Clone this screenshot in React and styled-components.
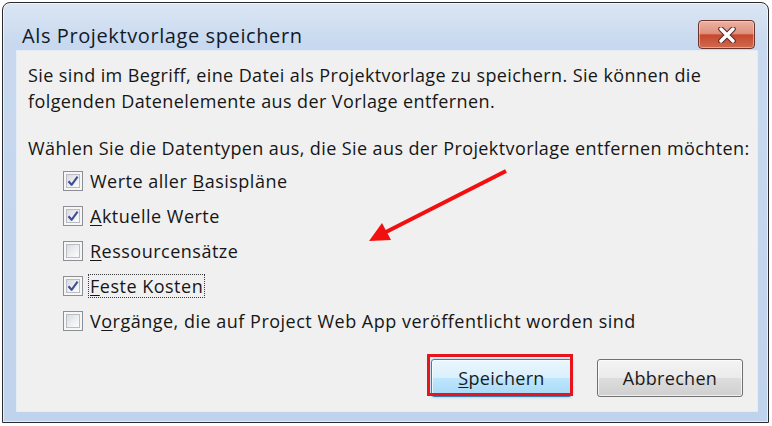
import React from "react";
import styled, { createGlobalStyle } from "styled-components";

const GlobalStyle = createGlobalStyle`
  body {
    margin: 0;
    background: #ffffff;
    font-family: "Open Sans", "Noto Sans", sans-serif;
  }
`;

const Window = styled.div`
  box-sizing: border-box;
  margin: 2px 0 0 2px;
  width: 767px;
  height: 421px;
  border: 1px solid #2b2b2b;
  border-radius: 8px 8px 0 0;
  background: linear-gradient(#dbe6f4 0px, #c8d9ef 40px, #c0d3ec 100%);
  display: flex;
  flex-direction: column;
  padding: 0 10px 10px 13px;
  box-shadow: inset 0 0 0 1px rgba(255, 255, 255, 0.6);
`;

const TitleBar = styled.div`
  height: 47px;
  display: flex;
  align-items: flex-start;
  justify-content: space-between;
`;

const Title = styled.div`
  margin: 21px 0 0 6px;
  font-size: 20px;
  letter-spacing: 0.6px;
  color: #111a28;
  line-height: 24px;
`;

const CloseButton = styled.div`
  box-sizing: border-box;
  margin: 17px 3px 0 0;
  width: 57px;
  height: 29px;
  border: 1px solid #6e3328;
  border-radius: 4px;
  background: linear-gradient(#eab2a5 0%, #e0907c 46%, #c6482d 52%, #cf6a4e 100%);
  box-shadow: inset 0 0 0 1px rgba(255, 220, 210, 0.5);
  display: flex;
  align-items: center;
  justify-content: center;
`;

const Panel = styled.div`
  position: relative;
  flex: 1;
  box-sizing: border-box;
  background: #f0f0f0;
  border: 1px solid #e4ecf6;
  padding: 11px 14px 14px 11px;
  display: flex;
  flex-direction: column;
  color: #161616;
  font-size: 18px;
  letter-spacing: 0.4px;
`;

const Text = styled.p`
  margin: ${(p) => p.$top || 0}px 0 0 0;
  line-height: 26px;
  white-space: nowrap;
`;

const List = styled.div`
  margin: 2px 0 0 35px;
  display: flex;
  flex-direction: column;
`;

const Row = styled.div`
  height: 35.2px;
  display: flex;
  align-items: center;
  gap: 5px;
`;

const Box = styled.div`
  box-sizing: border-box;
  width: 20px;
  height: 20px;
  border: 1px solid #8c8f94;
  background: #f6f6f6;
  padding: 2px;
  display: flex;
`;

const BoxInner = styled.div`
  flex: 1;
  border: 1px solid #b9bcc2;
  background: linear-gradient(135deg, #d9dbe0 0%, #f0f1f3 60%, #fbfbfb 100%);
  display: flex;
  align-items: center;
  justify-content: center;
`;

const Label = styled.span`
  line-height: 22px;
  padding: 0 1px;
  letter-spacing: 0.5px;
  border: 1px ${(p) => (p.$focus ? "dotted #3a3a3a" : "solid transparent")};
`;

const Key = styled.span`
  text-decoration: underline;
  text-underline-offset: 2px;
`;

const Buttons = styled.div`
  margin-top: auto;
  display: flex;
  justify-content: flex-end;
  gap: 25px;
`;

const ButtonWrap = styled.div`
  position: relative;
`;

const Highlight = styled.div`
  position: absolute;
  left: -4px;
  top: -5px;
  width: 146px;
  height: 42px;
  box-sizing: border-box;
  border: 3px solid #e8141b;
  pointer-events: none;
`;

const Button = styled.div`
  box-sizing: border-box;
  width: ${(p) => p.$width}px;
  height: 38px;
  border-radius: 3px;
  font-size: 18px;
  letter-spacing: 0.3px;
  color: #1a1a1a;
  display: flex;
  align-items: center;
  justify-content: center;
  border: 1px solid ${(p) => (p.$primary ? "#3c7fb1" : "#707070")};
  background: ${(p) =>
    p.$primary
      ? "linear-gradient(#eaf6fd 0%, #d9f0fc 50%, #bee6fd 51%, #a7d9f5 100%)"
      : "linear-gradient(#f4f4f4 0%, #ebebeb 50%, #dddddd 51%, #cfcfcf 100%)"};
  box-shadow: inset 0 0 0 1px rgba(255, 255, 255, 0.7)
    ${(p) => (p.$primary ? ", 0 0 3px #7cc4f0" : "")};
`;

const Arrow = styled.svg`
  position: absolute;
  left: 340px;
  top: 110px;
  width: 180px;
  height: 90px;
  overflow: visible;
`;

const Check = () => (
  <svg width="12" height="12" viewBox="0 0 12 12">
    <path
      d="M1.5 6.2 L4.6 9.8 L10.6 1.6"
      fill="none"
      stroke="#3d4f95"
      strokeWidth="2.1"
      strokeLinejoin="round"
    />
  </svg>
);

const items = [
  { checked: true, label: ["Werte aller ", "B", "asispläne"] },
  { checked: true, label: ["", "A", "ktuelle Werte"] },
  { checked: false, label: ["", "R", "essourcensätze"] },
  { checked: true, label: ["", "F", "este Kosten"], focus: true },
  {
    checked: false,
    label: ["V", "o", "rgänge, die auf Project Web App veröffentlicht worden sind"],
  },
];

export default function App() {
  return (
    <>
      <GlobalStyle />
      <Window>
        <TitleBar>
          <Title>Als Projektvorlage speichern</Title>
          <CloseButton>
            <svg width="20" height="16" viewBox="0 0 20 16">
              <path d="M4 2 L16 14 M16 2 L4 14" stroke="#5a2a22" strokeWidth="5.5" strokeLinecap="round" />
              <path d="M4 2 L16 14 M16 2 L4 14" stroke="#ffffff" strokeWidth="3.4" strokeLinecap="round" />
            </svg>
          </CloseButton>
        </TitleBar>
        <Panel>
          <Text>
            Sie sind im Begriff, eine Datei als Projektvorlage zu speichern. Sie können die
            <br />
            folgenden Datenelemente aus der Vorlage entfernen.
          </Text>
          <Text $top={21}>
            Wählen Sie die Datentypen aus, die Sie aus der Projektvorlage entfernen möchten:
          </Text>
          <List>
            {items.map((item, i) => (
              <Row key={i}>
                <Box>
                  <BoxInner>{item.checked && <Check />}</BoxInner>
                </Box>
                <Label $focus={item.focus}>
                  {item.label[0]}
                  <Key>{item.label[1]}</Key>
                  {item.label[2]}
                </Label>
              </Row>
            ))}
          </List>
          <Buttons>
            <ButtonWrap>
              <Button $primary $width={141}>
                <span>
                  <Key>S</Key>peichern
                </span>
              </Button>
              <Highlight />
            </ButtonWrap>
            <Button $width={146}>Abbrechen</Button>
          </Buttons>
          <Arrow viewBox="0 0 180 90">
            <line x1="149" y1="10" x2="29" y2="71" stroke="#f20f0f" strokeWidth="4" />
            <polygon points="12,80 34,79 25,62" fill="#f20f0f" />
          </Arrow>
        </Panel>
      </Window>
    </>
  );
}
